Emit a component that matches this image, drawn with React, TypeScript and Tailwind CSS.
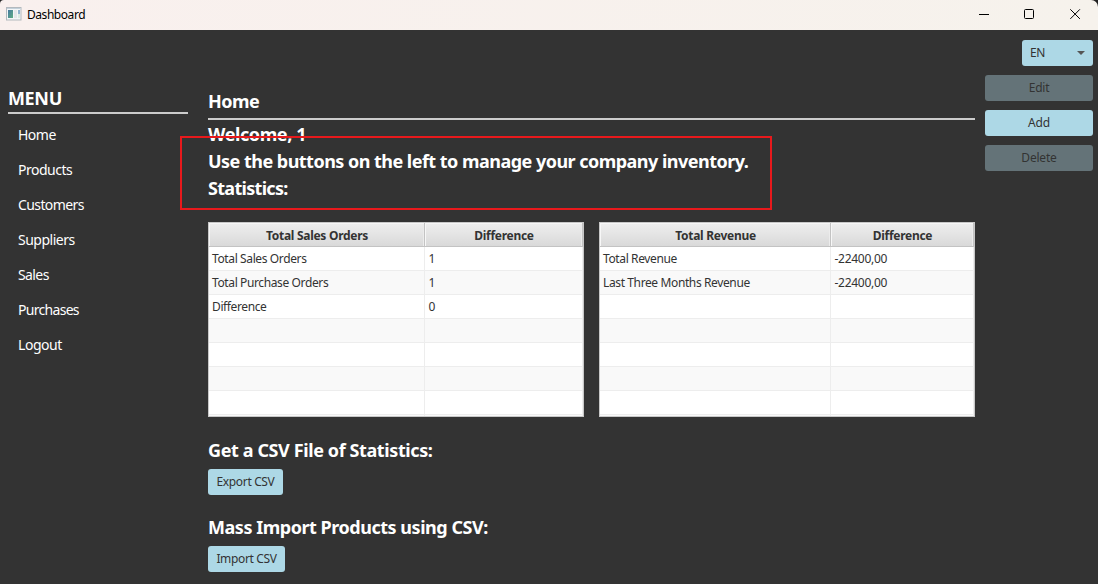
import React from "react";

const menuItems = [
  { label: "Home", spacing: "tracking-[-0.5px]" },
  { label: "Products", spacing: "tracking-[-0.5px]" },
  { label: "Customers", spacing: "tracking-[-0.6px]" },
  { label: "Suppliers", spacing: "tracking-[-0.5px]" },
  { label: "Sales", spacing: "tracking-[-0.6px]" },
  { label: "Purchases", spacing: "tracking-[-0.7px]" },
  { label: "Logout", spacing: "tracking-[-0.45px]" },
];

type TableProps = {
  headers: [string, string];
  rows: [string, string][];
  firstColumn: string;
};

function StatsTable({ headers, rows, firstColumn }: TableProps) {
  const padded: [string, string][] = Array.from({ length: 8 }, (_, i) => rows[i] ?? ["", ""]);
  const head =
    "h-6 border-r border-b border-[#c3c3c3] bg-linear-to-b from-[#efefef] to-[#d9d9d9] pt-px pl-px text-center text-[12px] leading-[24px] font-bold tracking-[-0.28px] shadow-[inset_1px_1px_0_#f7f7f7,inset_-1px_0_0_#ececec]";
  return (
    <div className="h-[195px] w-[376px] overflow-hidden border border-[#c8c8c8] bg-white text-[#333333]">
      <div className="flex">
        <div className={`${head} ${firstColumn} shrink-0`}>{headers[0]}</div>
        <div className={`${head} flex-1`}>{headers[1]}</div>
      </div>
      {padded.map((row, i) => (
        <div key={i} className={i % 2 ? "flex h-6 bg-[#f9f9f9]" : "flex h-6 bg-white"}>
          <div
            className={`${firstColumn} shrink-0 border-r border-b border-[#ededed] pl-[3px] text-[12px] leading-[23px] tracking-[-0.38px]`}
          >
            {row[0]}
          </div>
          <div className="flex-1 border-r border-b border-[#ededed] pl-[3.5px] text-[12px] leading-[23px] tracking-[-0.28px]">
            {row[1]}
          </div>
        </div>
      ))}
    </div>
  );
}

function SideButton({ label, disabled }: { label: string; disabled?: boolean }) {
  return (
    <button
      disabled={disabled}
      className={
        disabled
          ? "h-[26px] w-[108px] rounded-[3px] bg-[#647378] text-[12px] leading-[26px] tracking-[-0.2px] text-[#333333]"
          : "h-[26px] w-[108px] rounded-[3px] bg-[#add8e6] text-[12px] leading-[26px] tracking-[-0.2px] text-[#333333]"
      }
    >
      {label}
    </button>
  );
}

function TitleBar() {
  return (
    <header className="flex h-[30px] items-center rounded-tl-[4px] rounded-tr-[7px] bg-linear-to-r from-[#f9f0ee] to-[#f6f2ec] text-black">
      <svg className="-mt-[2px] ml-[6px]" width="16" height="14" viewBox="0 0 16 14">
        <defs>
          <linearGradient id="pane" x1="0" y1="0" x2="1" y2="1">
            <stop offset="0" stopColor="#4778a0" />
            <stop offset="1" stopColor="#5fae84" />
          </linearGradient>
        </defs>
        <rect x="0.5" y="0.5" width="14.5" height="12.5" fill="#f4f6f7" stroke="#b3b9be" />
        <rect x="1" y="1" width="13.5" height="1" fill="#c3d0da" />
        <rect x="2" y="3" width="5" height="8" fill="url(#pane)" />
        <rect x="8" y="3" width="3" height="8" fill="#e4e7ea" />
        <rect x="12" y="3" width="2" height="4" fill="#8fb3cf" />
        <rect x="12" y="7" width="2" height="4" fill="#dcebe4" />
      </svg>
      <span className="ml-[5px] text-[12px] tracking-[-0.45px]">Dashboard</span>
      <svg className="ml-auto" width="120" height="30" viewBox="0 0 120 30" fill="none" stroke="#000">
        <path d="M1 14.5h10" />
        <rect x="46.5" y="9.5" width="9" height="9" rx="1" />
        <path d="M92.3 9.3l9.6 9.6M101.9 9.3l-9.6 9.6" />
      </svg>
    </header>
  );
}

export default function App() {
  return (
    <div className="flex h-[584px] w-[1098px] flex-col overflow-hidden bg-[#222222] font-['Noto_Sans','Open_Sans',sans-serif] text-white">
      <TitleBar />
      <div className="flex flex-1 bg-[#333333]">
        <aside className="ml-2 w-[180px] pt-[56px]">
          <h2 className="h-[28px] border-b-2 border-[#cccccc] text-[18px] leading-[24px] font-bold tracking-[-0.35px]">
            MENU
          </h2>
          <nav className="mt-[3px] ml-[10px] flex flex-col">
            {menuItems.map((item) => (
              <a key={item.label} className={`h-[35px] text-[14px] leading-[35px] ${item.spacing}`}>
                {item.label}
              </a>
            ))}
          </nav>
        </aside>

        <main className="relative ml-5 w-[767px] pt-[56px]">
          <h1 className="h-[34px] border-b-2 border-[#cccccc] text-[18px] leading-[30px] font-bold tracking-[-0.5px]">
            Home
          </h1>
          <div className="mt-px text-[18px] leading-[27px] font-bold whitespace-nowrap">
            <p className="tracking-[-0.4px]">Welcome, 1</p>
            <p className="tracking-[-0.525px]">Use the buttons on the left to manage your company inventory.</p>
            <p className="tracking-[-0.7px]">Statistics:</p>
          </div>
          <div className="mt-5 flex gap-[15px]">
            <StatsTable
              headers={["Total Sales Orders", "Difference"]}
              firstColumn="w-[216px]"
              rows={[
                ["Total Sales Orders", "1"],
                ["Total Purchase Orders", "1"],
                ["Difference", "0"],
              ]}
            />
            <StatsTable
              headers={["Total Revenue", "Difference"]}
              firstColumn="w-[231px]"
              rows={[
                ["Total Revenue", "-22400,00"],
                ["Last Three Months Revenue", "-22400,00"],
              ]}
            />
          </div>
          <h3 className="mt-5 text-[18px] leading-[27px] font-bold tracking-[-0.39px]">Get a CSV File of Statistics:</h3>
          <button className="mt-[5px] block h-[26px] w-[75px] rounded-[3px] bg-[#add8e6] text-[12px] leading-[26px] tracking-[-0.35px] whitespace-nowrap text-[#333333]">
            Export CSV
          </button>
          <h3 className="mt-[19px] text-[18px] leading-[27px] font-bold tracking-[-0.47px]">
            Mass Import Products using CSV:
          </h3>
          <button className="mt-[5px] block h-[26px] w-[77px] rounded-[3px] bg-[#add8e6] text-[12px] leading-[26px] tracking-[-0.35px] whitespace-nowrap text-[#333333]">
            Import CSV
          </button>
          <div className="pointer-events-none absolute top-[106px] left-[-28px] h-[74px] w-[592px] border-2 border-[#e8191c]" />
        </main>

        <aside className="ml-[10px] flex w-[108px] flex-col items-end gap-[9px] pt-[10px]">
          <button className="flex h-[26px] w-[71px] items-center justify-between rounded-[3px] bg-[#add8e6] pr-2 pl-2 text-[12px] tracking-[-0.3px] text-[#333333]">
            EN
            <svg width="8" height="4" viewBox="0 0 8 4">
              <path d="M0 0h8L4 4z" fill="#555" />
            </svg>
          </button>
          <SideButton label="Edit" disabled />
          <SideButton label="Add" />
          <SideButton label="Delete" disabled />
        </aside>
      </div>
    </div>
  );
}
